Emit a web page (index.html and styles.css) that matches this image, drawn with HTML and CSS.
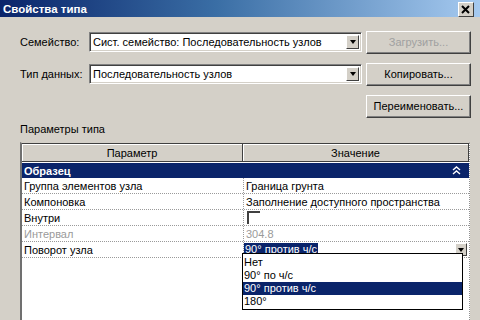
FILE: index.html
```html
<!DOCTYPE html>
<html lang="ru">
<head>
<meta charset="utf-8">
<title>Свойства типа</title>
<link rel="stylesheet" href="styles.css">
</head>
<body>
<div class="window">
  <div class="titlebar">
    <span class="title">Свойства типа</span>
    <span class="close">
      <svg width="10" height="9" viewBox="0 0 10 9"><path d="M1 1 L8 8 M8 1 L1 8" stroke="#000" stroke-width="2"/></svg>
    </span>
  </div>
  <div class="content">
    <div class="form-row">
      <span class="label">Семейство:</span>
      <div class="combo"><span class="combo-text">Сист. семейство: Последовательность узлов</span><span class="arrow-btn"><i class="tri"></i></span></div>
      <span class="btn disabled">Загрузить...</span>
    </div>
    <div class="form-row">
      <span class="label">Тип данных:</span>
      <div class="combo"><span class="combo-text">Последовательность узлов</span><span class="arrow-btn"><i class="tri"></i></span></div>
      <span class="btn">Копировать...</span>
    </div>
    <div class="form-row right">
      <span class="btn">Переименовать...</span>
    </div>
    <div class="section-label">Параметры типа</div>
    <div class="grid">
      <div class="head">
        <div class="hcell">Параметр</div>
        <div class="hcell">Значение</div>
      </div>
      <div class="group-row">
        <span>Образец</span>
        <svg class="chev" width="9" height="9" viewBox="0 0 9 9"><path d="M1 4 L4.5 1 L8 4 M1 8 L4.5 5 L8 8" fill="none" stroke="#fff" stroke-width="1.4"/></svg>
      </div>
      <div class="row"><div class="cell">Группа элементов узла</div><div class="cell">Граница грунта</div></div>
      <div class="row"><div class="cell">Компоновка</div><div class="cell">Заполнение доступного пространства</div></div>
      <div class="row"><div class="cell">Внутри</div><div class="cell"><span class="check"></span></div></div>
      <div class="row muted"><div class="cell">Интервал</div><div class="cell">304.8</div></div>
      <div class="row"><div class="cell">Поворот узла</div><div class="cell editing"><span class="sel-text">90° против ч/с</span><span class="arrow-btn small"><i class="tri"></i></span></div></div>
      <ul class="dropdown">
        <li>Нет</li>
        <li>90° по ч/с</li>
        <li class="selected">90° против ч/с</li>
        <li>180°</li>
      </ul>
    </div>
  </div>
</div>
</body>
</html>
```
FILE: styles.css
```css
html, body {
  margin: 0;
  padding: 0;
  background: #d4d0c8;
  width: 480px;
  height: 320px;
  overflow: hidden;
  font-family: "Liberation Sans", Arial, sans-serif;
  font-size: 11px;
  color: #000;
}

.window {
  display: flex;
  flex-direction: column;
  height: 320px;
}

.titlebar {
  height: 17px;
  display: flex;
  align-items: center;
  justify-content: space-between;
  padding: 0 6px 0 3px;
  background: linear-gradient(to right, #0a246a 0%, #3a6ea5 45%, #a6caf0 100%);
}

.title {
  color: #fff;
  font-weight: bold;
  font-size: 11.5px;
}

.close {
  width: 14px;
  height: 13px;
  background: #d4d0c8;
  border: 1px solid;
  border-color: #fff #404040 #404040 #fff;
  display: flex;
  align-items: center;
  justify-content: center;
  margin-top: 1px;
}

.content {
  display: flex;
  flex-direction: column;
  padding: 14px 9px 0 20px;
  flex: 1;
}

.form-row {
  display: flex;
  align-items: center;
  height: 22px;
  margin-bottom: 10px;
}

.form-row.right {
  justify-content: flex-end;
  margin-top: -1px;
  margin-bottom: 0;
  height: 24px;
}

.label {
  width: 69px;
}

.combo {
  width: 267px;
  height: 18px;
  background: #fff;
  border: 1px solid;
  border-color: #808080 #fff #fff #808080;
  box-shadow: inset 1px 1px 0 #404040, inset -1px -1px 0 #d4d0c8;
  display: flex;
  align-items: center;
  justify-content: space-between;
  padding: 0 2px 0 2px;
}

.combo-text {
  padding-left: 1px;
}

.arrow-btn {
  width: 11px;
  height: 12px;
  background: #d4d0c8;
  border: 1px solid;
  border-color: #fff #404040 #404040 #fff;
  display: flex;
  align-items: center;
  justify-content: center;
}

.tri {
  width: 0;
  height: 0;
  border-left: 3.5px solid transparent;
  border-right: 3.5px solid transparent;
  border-top: 4px solid #000;
}

.btn {
  margin-left: auto;
  width: 103px;
  height: 21px;
  background: #d4d0c8;
  border: 1px solid;
  border-color: #fff #404040 #404040 #fff;
  box-shadow: inset -1px -1px 0 #808080;
  display: flex;
  align-items: center;
  justify-content: center;
}

.btn.disabled {
  color: #a0a0a0;
}

.section-label {
  margin-top: 4px;
  height: 14px;
  line-height: 14px;
}

.grid {
  position: relative;
  margin-top: 6px;
  flex: 1;
  width: 447px;
  background: #fff;
  border-left: 2px solid #707070;
  border-top: 1px solid #d4d0c8;
  border-right: 1px dotted #909090;
}

.head {
  display: grid;
  grid-template-columns: 221px 1fr;
  height: 17px;
  border-top: 1px solid #404040;
  border-bottom: 1px solid #404040;
  background: #d4d0c8;
}

.hcell {
  display: flex;
  align-items: center;
  justify-content: center;
  border-right: 1px solid #404040;
  box-shadow: inset 1px 1px 0 #fff;
}

.group-row {
  height: 15px;
  margin-top: 1px;
  background: #0a246a;
  color: #fff;
  font-weight: bold;
  display: flex;
  align-items: center;
  justify-content: space-between;
  padding: 0 8px 0 2px;
}

.row {
  display: grid;
  grid-template-columns: 221px 1fr;
  height: 15px;
  border-bottom: 1px dotted #9a9a9a;
}

.cell {
  display: flex;
  align-items: center;
  padding-left: 2px;
}

.cell + .cell {
  border-left: 1px dotted #9a9a9a;
}

.muted .cell {
  color: #9a9a9a;
}

.check {
  width: 11px;
  height: 11px;
  border-left: 2px solid #404040;
  border-top: 2px solid #404040;
  margin-left: 1px;
}

.editing {
  justify-content: space-between;
  padding-left: 0;
  padding-right: 2px;
}

.sel-text {
  background: #0a246a;
  color: #fff;
  padding: 0 1px;
  line-height: 13px;
}

.arrow-btn.small {
  width: 10px;
  height: 11px;
}

.dropdown {
  position: absolute;
  left: 220px;
  top: 110px;
  width: 219px;
  margin: 0;
  padding: 2px 0 1px;
  list-style: none;
  background: #fff;
  border: 1px solid #000;
}

.dropdown li {
  height: 13px;
  line-height: 13px;
  padding-left: 1px;
}

.dropdown li.selected {
  background: #0a246a;
  color: #fff;
}
```
